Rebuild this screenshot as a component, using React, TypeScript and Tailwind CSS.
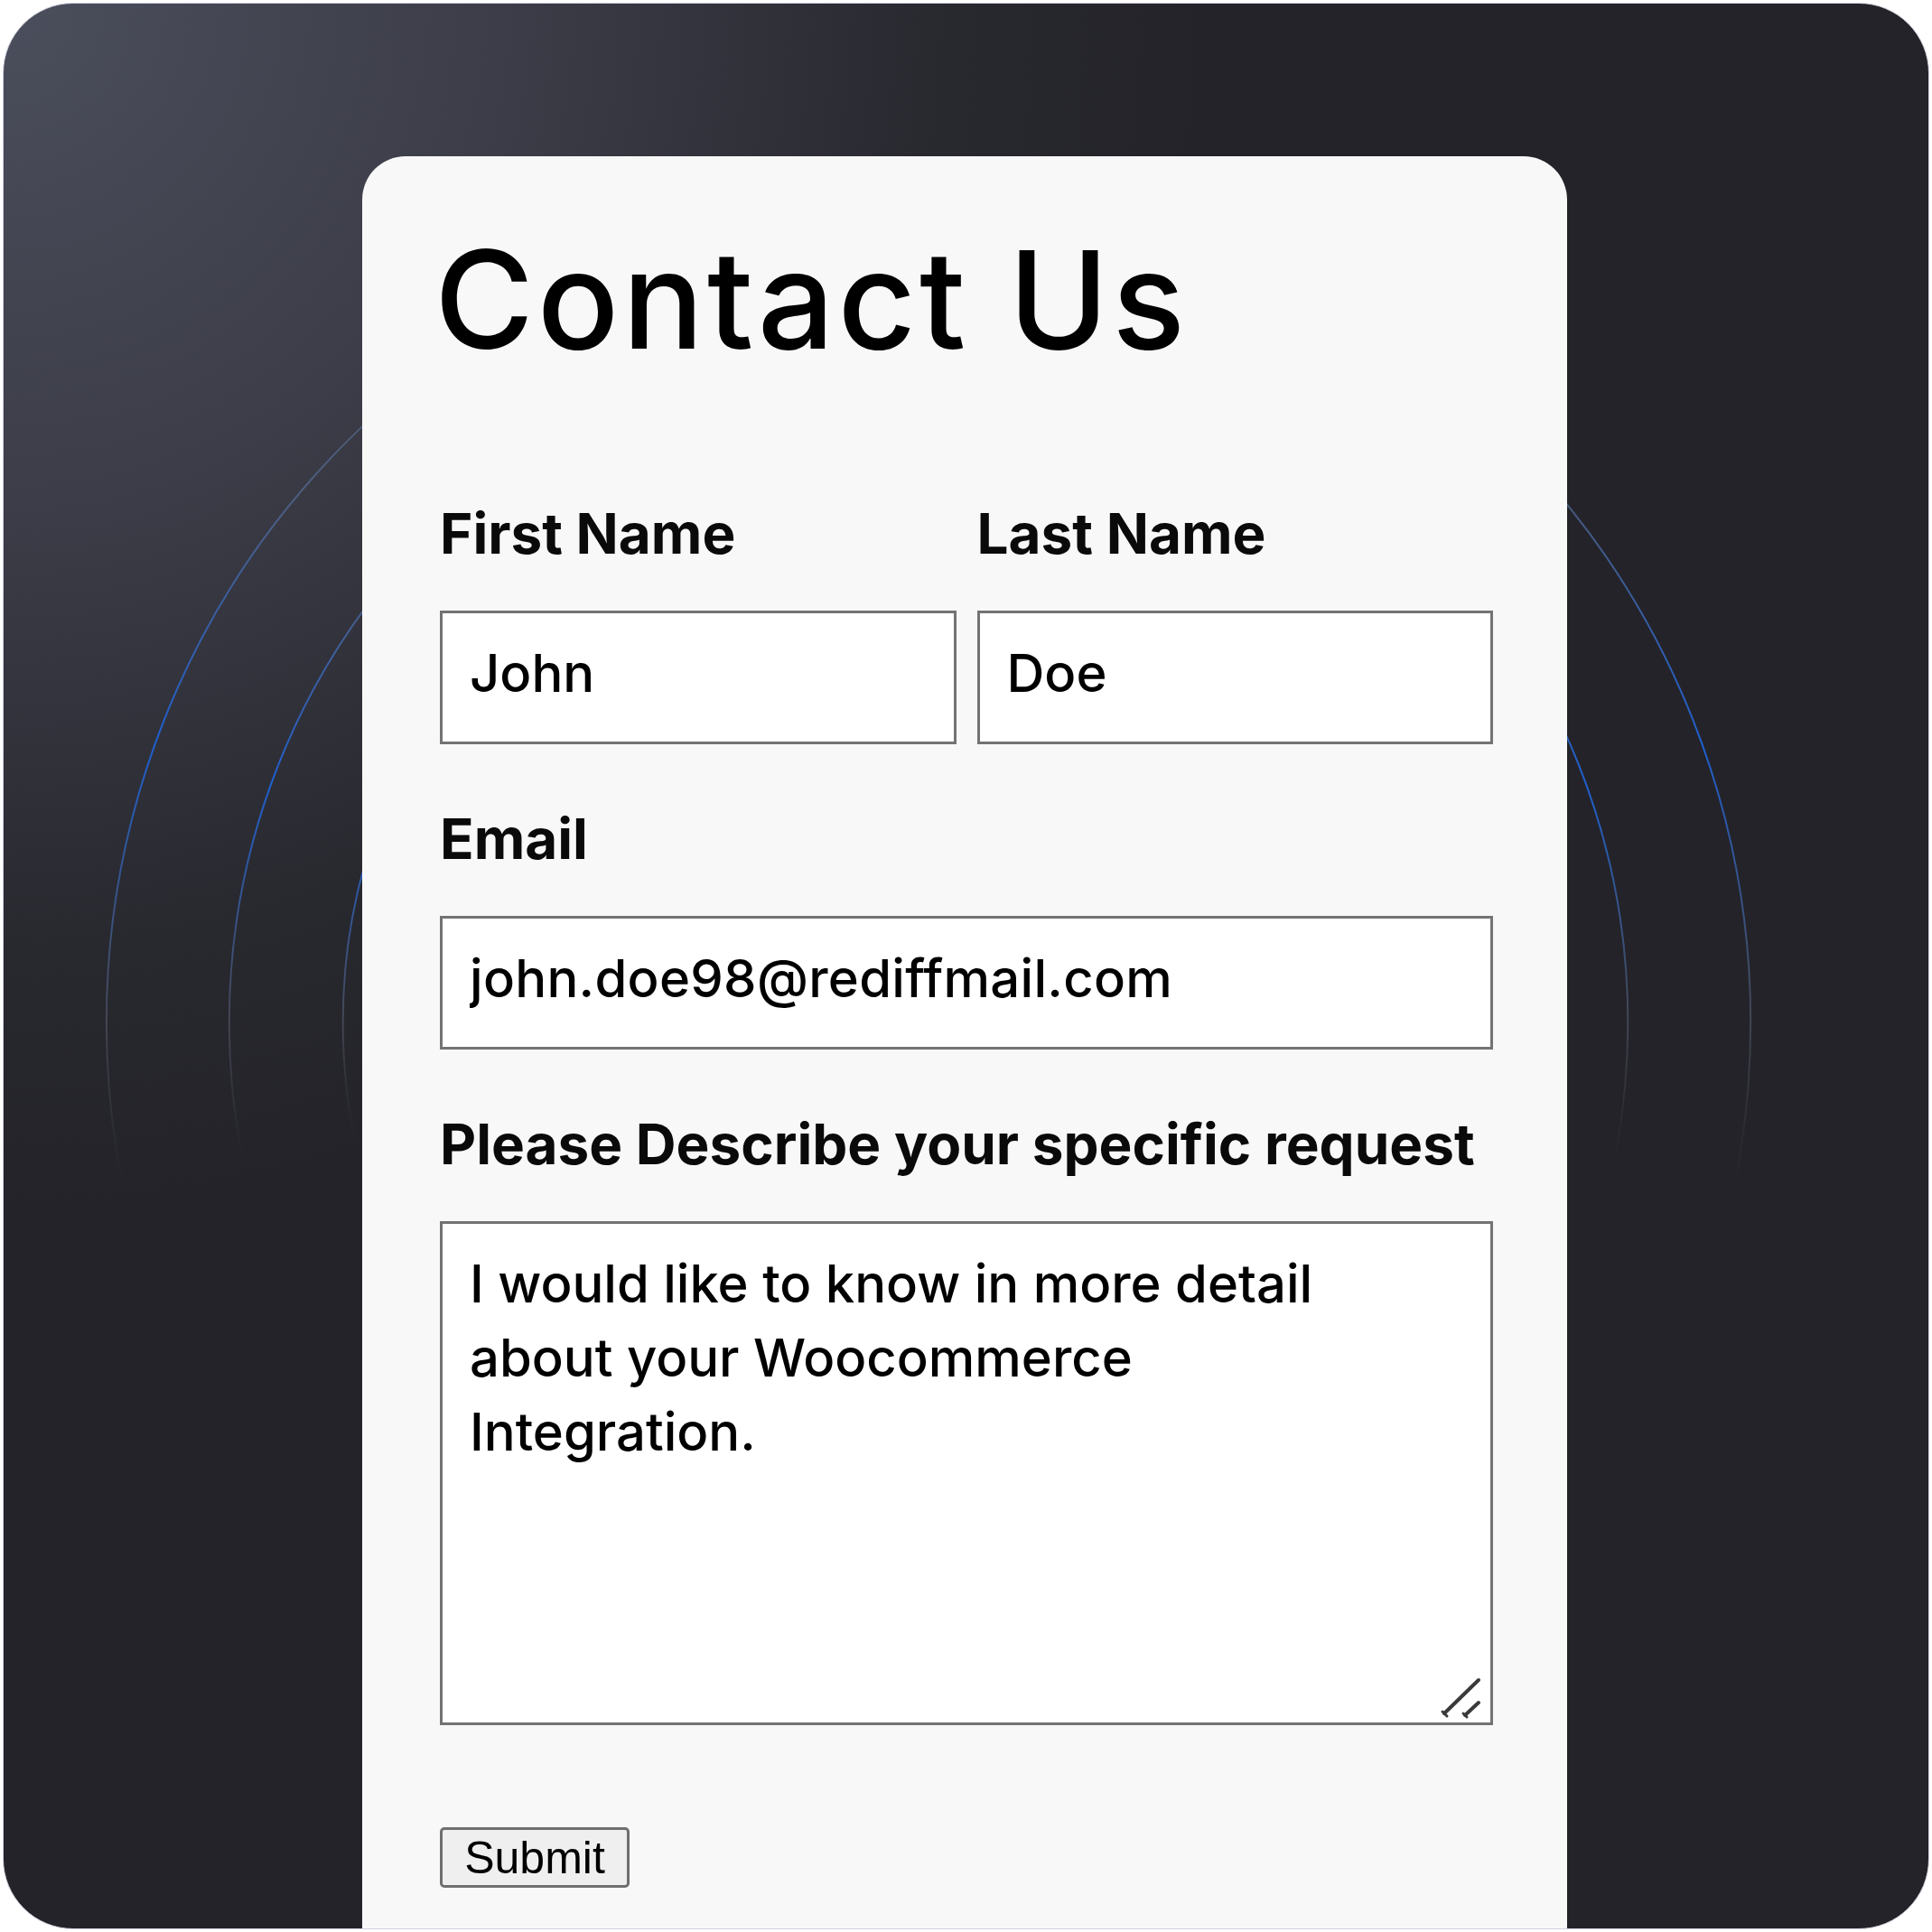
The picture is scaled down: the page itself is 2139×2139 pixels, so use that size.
import React from "react";

// Contact form card on a dark backdrop with faint concentric rings.

const inputClass =
  "block w-full h-[148px] border-[3px] border-[#737373] bg-white pl-[30px] pr-[20px] pb-[10px] text-[58px] font-medium text-black outline-none";

const labelClass =
  "block text-[62px] font-bold leading-none text-[#0a0a0a]";

function Rings() {
  return (
    <svg
      className="absolute inset-0 h-full w-full"
      viewBox="0 0 2133 2133"
      fill="none"
      aria-hidden="true"
    >
      <defs>
        <linearGradient id="ring" x1="0" y1="0" x2="0" y2="1">
          <stop offset="0" stopColor="#5d6b88" stopOpacity="0.4" />
          <stop offset="0.18" stopColor="#52678f" stopOpacity="0.8" />
          <stop offset="0.33" stopColor="#1f5fd0" stopOpacity="1" />
          <stop offset="0.44" stopColor="#3d5684" stopOpacity="0.9" />
          <stop offset="0.5" stopColor="#4b4f5c" stopOpacity="0.8" />
          <stop offset="0.6" stopColor="#3a3d48" stopOpacity="0" />
        </linearGradient>
      </defs>
      <circle cx="1025" cy="1129" r="911" stroke="url(#ring)" strokeWidth="2" />
      <circle cx="1025" cy="1129" r="775" stroke="url(#ring)" strokeWidth="2" />
      <circle cx="1025" cy="1129" r="649" stroke="url(#ring)" strokeWidth="2" />
    </svg>
  );
}

function ResizeGrip() {
  return (
    <svg
      className="pointer-events-none absolute bottom-0 right-0 h-[60px] w-[60px]"
      viewBox="0 0 60 60"
      fill="none"
      stroke="#3a3a3a"
      strokeWidth="4"
      strokeLinecap="round"
      aria-hidden="true"
    >
      <path d="M6 47 L44 10" />
      <path d="M29 49 L44 35" />
      <path d="M4 45 L9 50" strokeWidth="3" />
      <path d="M27 47 L31 51" strokeWidth="3" />
    </svg>
  );
}

export default function App() {
  return (
    <div className="h-[2139px] w-[2139px] bg-white p-[3px]">
      <div className="relative flex h-full w-full flex-col overflow-hidden rounded-[78px] border border-[#cfd0dc] bg-[radial-gradient(circle_at_0_0,#4b4e5c_0px,#3c3d48_550px,#28282f_1050px,#232329_1350px)] pl-[397px] pt-[169px]">
        <Rings />
        <div className="relative flex w-[1334px] flex-1 flex-col rounded-t-[48px] bg-[#f8f8f8] pl-[86px] pr-[82px] pt-[84px] font-['Inter',sans-serif] text-black">
          <h1 className="-ml-[6px] text-[150px] font-medium leading-none tracking-[0.025em]">
            Contact Us
          </h1>

          <div className="mt-[153px] grid grid-cols-2 gap-x-[23px]">
            <div>
              <label htmlFor="first" className={labelClass}>
                First Name
              </label>
              <input
                id="first"
                readOnly
                defaultValue="John"
                className={`${inputClass} mt-[54px]`}
              />
            </div>
            <div>
              <label htmlFor="last" className={labelClass}>
                Last Name
              </label>
              <input
                id="last"
                readOnly
                defaultValue="Doe"
                className={`${inputClass} mt-[54px]`}
              />
            </div>
          </div>

          <div className="mt-[74px]">
            <label htmlFor="email" className={labelClass}>
              Email
            </label>
            <input
              id="email"
              readOnly
              defaultValue="john.doe98@rediffmail.com"
              className={`${inputClass} mt-[54px] tracking-[0.005em]`}
            />
          </div>

          <div className="mt-[74px]">
            <label htmlFor="request" className={labelClass}>
              Please Describe your specific request
            </label>
            <div className="relative mt-[54px]">
              <textarea
                id="request"
                readOnly
                value={
                  "I would like to know in more detail\nabout your Woocommerce\nIntegration."
                }
                className="block h-[558px] w-full resize-none overflow-hidden border-[3px] border-[#737373] bg-white pl-[30px] pr-[20px] pt-[25px] text-[58px] font-medium leading-[82px] text-black outline-none"
              />
              <ResizeGrip />
            </div>
          </div>

          <div className="mt-[113px]">
            <button
              type="button"
              className="flex h-[67px] w-[210px] items-center justify-center rounded-[5px] border-[3px] border-[#6f6f6f] bg-[#efefef] font-['Liberation_Sans',Arial,sans-serif] text-[50px] leading-none text-black"
            >
              Submit
            </button>
          </div>
        </div>
      </div>
    </div>
  );
}
